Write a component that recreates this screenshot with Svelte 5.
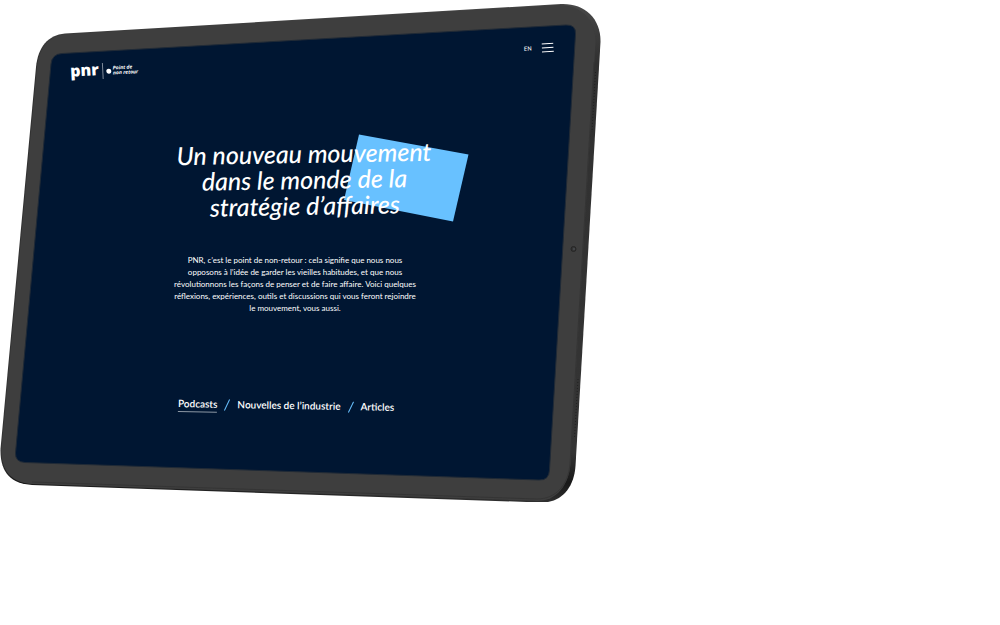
<script>
  let active = $state('Podcasts');
  const links = ['Podcasts', 'Nouvelles de l’industrie', 'Articles'];
</script>

<main>
  <section class="tablet">
    <svg class="art" viewBox="0 0 602 504" aria-hidden="true">
      <defs>
        <linearGradient id="edge" x1="0" y1="0" x2="0" y2="1">
          <stop offset="0" stop-color="#484848" />
          <stop offset="0.12" stop-color="#303030" />
          <stop offset="0.9" stop-color="#343434" />
          <stop offset="0.96" stop-color="#181818" />
          <stop offset="1" stop-color="#303030" />
        </linearGradient>
      </defs>
      <path fill="url(#edge)" d="M65 33.5 L561 4 C584 3 601 18 600.5 42 L575.5 466 C574 488 561 503 541 502.500 L32 485 C11 483.500 0 473 0.500 449 L36 67 C38 47 48 35 65 33.500Z" />
      <path fill="#3e3e3e" d="M65 34.500 L557 5 C580 4 596 19 595.500 43 L570.500 464 C569 485 556 501.500 537 501 L32 484 C12 482.500 1 472 1.500 449 L37 67 C39 48 49 36 65 34.500Z" />
      <path fill="none" stroke="#353535" d="M594 62 L570 464 C568 485 556 499 537 499 L32 482" />
      <path fill="none" stroke="#202020" stroke-dasharray="1 2" d="M595.500 72 L592 132 M578 379 L574.500 438" />
      <path fill="#001632" stroke="#202a36" d="M62 53.500 L566 25 Q576 24.500 575.500 34 L549.500 470 Q549 480.500 539 480 L25 462.500 Q15 462 15.500 453 L51 64 Q52 54 62 53.500Z" />
      <circle cx="573.500" cy="249" r="2.500" fill="#343434" stroke="#252525" />
      <circle cx="574" cy="249" r="1" fill="#484c50" />
      <path fill="#68c1ff" d="M359 134.500 L468.500 154.500 L453 221.500 L344 200Z" />
    </svg>

    <div class="screen">
      <header>
        <a class="brand" href="#accueil">
          <span class="name">pnr</span>
          <span class="rule"></span>
          <span class="dot"></span>
          <span class="tagline">Point de<br />non retour</span>
        </a>
        <a class="lang" href="#en">EN</a>
        <button type="button" aria-label="Menu">
          <svg viewBox="0 0 12 10"><path d="M0 1H12M0 5H12M0 9H12" stroke="#fff" fill="none" /></svg>
        </button>
      </header>

      <h1>Un nouveau mouvement<br />dans le monde de la<br />stratégie d’affaires</h1>

      <p>
        PNR, c’est le point de non-retour : cela signifie que nous nous<br />
        opposons à l’idée de garder les vieilles habitudes, et que nous<br />
        révolutionnons les façons de penser et de faire affaire. Voici quelques<br />
        réflexions, expériences, outils et discussions qui vous feront rejoindre<br />
        le mouvement, vous aussi.
      </p>

      <nav>
        {#each links as link, i}
          {#if i > 0}
            <svg class="slash" viewBox="0 0 6 12" aria-hidden="true"><path d="M5.500 0.500L0.500 11.500" stroke="#68c1ff" fill="none" /></svg>
          {/if}
          <a href="#{i}" class:active={active === link} onclick={() => (active = link)}>{link}</a>
        {/each}
      </nav>
    </div>
  </section>
</main>

<style>
  :global(body) {
    margin: 0;
    background: #fff;
  }
  .tablet {
    position: relative;
    width: 60.2%;
    min-width: 602px;
    font-family: Lato, sans-serif;
    color: #fff;
  }
  .art {
    position: absolute;
    top: 0;
    left: 0;
    width: 100%;
    height: auto;
    overflow: visible;
  }
  .screen {
    position: relative;
    display: flex;
    flex-direction: column;
    align-items: center;
    padding: 48px 48px 88px 70px;
  }
  header {
    display: flex;
    align-items: center;
    align-self: stretch;
    height: 24px;
    transform: rotate(-3deg);
  }
  a {
    color: inherit;
    text-decoration: none;
  }
  .brand {
    display: flex;
    align-items: center;
    margin-right: auto;
  }
  .name {
    margin-top: -4px;
    font: 800 16px/20px "Open Sans", sans-serif;
  }
  .rule {
    width: 1px;
    height: 16px;
    margin: 0 3px;
    background: #7d8998;
  }
  .dot {
    width: 5px;
    height: 5px;
    margin-right: 2px;
    border-radius: 50%;
    background: #fff;
  }
  .tagline {
    font: italic 700 5px/5px "Open Sans", sans-serif;
  }
  .lang {
    margin-right: 10px;
    font: 6px/8px Roboto, sans-serif;
  }
  button {
    display: flex;
    padding: 0;
    border: 0;
    background: none;
    cursor: pointer;
  }
  button svg {
    width: 12px;
    height: 10px;
  }
  h1 {
    margin: 68px 16px 0 0;
    font: italic 500 25px/26px Lato, sans-serif;
    text-align: center;
    white-space: nowrap;
    transform: rotate(-1deg);
  }
  p {
    margin: 36px 34px 0 0;
    font: 8px/12px Lato, sans-serif;
    text-align: center;
    white-space: nowrap;
  }
  nav {
    display: flex;
    align-items: center;
    gap: 7px;
    margin: 83px 52px 0 0;
    font: 600 10px/16px Lato, sans-serif;
    white-space: nowrap;
    transform: rotate(1deg);
  }
  nav a {
    border-bottom: 1px solid transparent;
  }
  nav a.active {
    border-color: #8c98a5;
  }
  .slash {
    width: 6px;
    height: 12px;
  }
</style>
